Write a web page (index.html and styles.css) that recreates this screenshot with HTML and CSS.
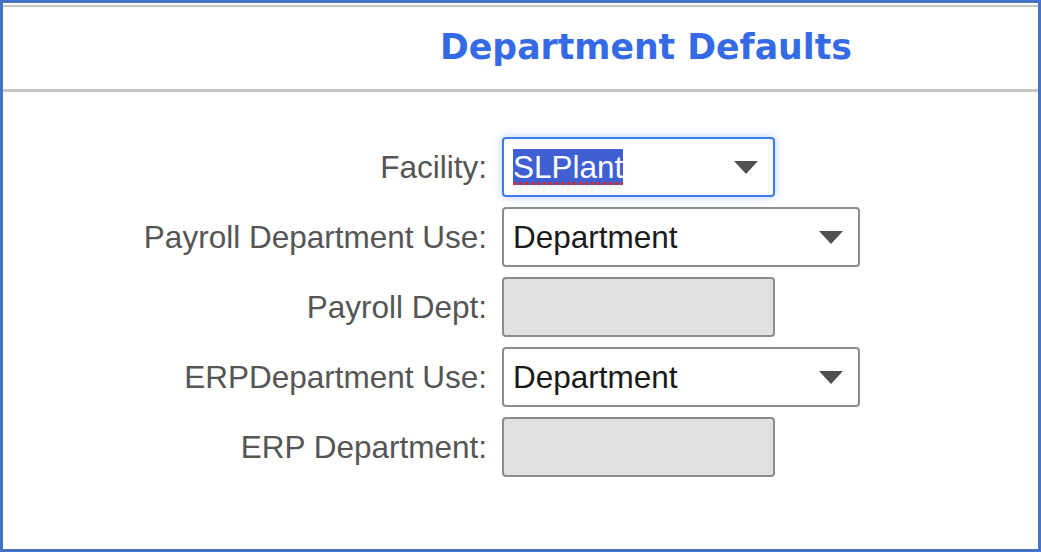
FILE: index.html
```html
<!DOCTYPE html>
<html lang="en">
<head>
    <meta charset="UTF-8">
    <meta name="viewport" content="width=device-width, initial-scale=1.0">
    <title>Department Defaults</title>
    <link rel="stylesheet" href="styles.css">
</head>
<body>
    <div class="frame">
        <div class="top-line"></div>
        <div class="header">
            <h1>Department Defaults</h1>
        </div>
        <div class="rule"></div>
        <div class="form">
            <div class="label">Facility:</div>
            <div class="combo short focused">
                <span class="value"><span class="selected">SLPlant</span></span>
                <svg class="arrow" width="24" height="13" viewBox="0 0 24 13"><polygon points="0,0 24,0 12,13" /></svg>
            </div>

            <div class="label">Payroll Department Use:</div>
            <div class="combo wide">
                <span class="value">Department</span>
                <svg class="arrow" width="24" height="13" viewBox="0 0 24 13"><polygon points="0,0 24,0 12,13" /></svg>
            </div>

            <div class="label">Payroll Dept:</div>
            <div class="field short disabled"></div>

            <div class="label">ERPDepartment Use:</div>
            <div class="combo wide">
                <span class="value">Department</span>
                <svg class="arrow" width="24" height="13" viewBox="0 0 24 13"><polygon points="0,0 24,0 12,13" /></svg>
            </div>

            <div class="label">ERP Department:</div>
            <div class="field short disabled"></div>
        </div>
    </div>
</body>
</html>
```

FILE: styles.css
```css
html, body {
    margin: 0;
    height: 100%;
}

body {
    font-family: "Liberation Sans", Arial, sans-serif;
    background: #fff;
}

.frame {
    box-sizing: border-box;
    height: 100vh;
    border: 3px solid #4472c4;
    background: #fff;
}

.top-line {
    height: 2px;
    margin-top: 2px;
    background: #c4c4c4;
    box-shadow: 0 0 1px #d8d8d8;
}

.header {
    box-sizing: border-box;
    height: 82px;
    padding: 20px 0 0 437px;
}

.header h1 {
    margin: 0;
    font-family: "DejaVu Sans", Verdana, sans-serif;
    font-size: 34.7px;
    font-weight: bold;
    color: #356ae6;
}

.rule {
    height: 3px;
    background: #c6c6c6;
    box-shadow: 0 0 1px #dadada;
}

.form {
    display: grid;
    grid-template-columns: 484px auto;
    column-gap: 15px;
    row-gap: 10px;
    padding-top: 45px;
    justify-content: start;
}

.label {
    display: flex;
    align-items: center;
    justify-content: flex-end;
    font-size: 31.5px;
    color: #555;
}

.combo,
.field {
    box-sizing: border-box;
    height: 60px;
    border: 2px solid #8c8c8c;
    border-radius: 4px;
    background: #fff;
}

.combo {
    display: flex;
    align-items: center;
    justify-content: space-between;
    padding: 0 15px 0 9px;
}

.short {
    width: 273px;
}

.wide {
    width: 358px;
}

.focused {
    border-color: #3d7be6;
    box-shadow: 0 0 10px rgba(80, 130, 230, 0.4);
}

.value {
    font-size: 31.5px;
    color: #1a1a1a;
}

.selected {
    background: #3f5fd2;
    color: #fff;
    text-decoration: underline dotted #e02828;
    text-decoration-thickness: 3px;
    text-underline-offset: 4px;
}

.arrow {
    fill: #505050;
}

.disabled {
    background: #e1e1e1;
}
```
